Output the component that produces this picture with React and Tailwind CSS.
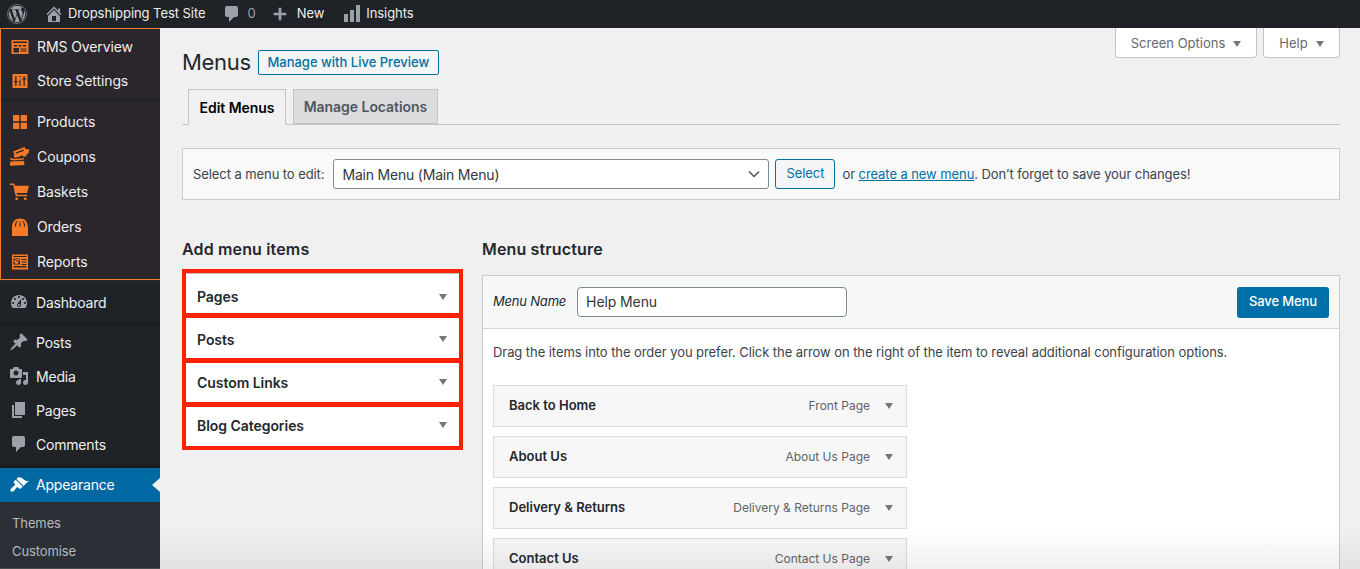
import React from 'react';
import { FaWordpress } from 'react-icons/fa';

const Dash = ({ d, className = '' }) => (
  <svg viewBox="0 0 20 20" className={className} fill="currentColor">
    <path d={d} />
  </svg>
);

const paths = {
  home: 'M16 8.5l1.53 1.53-1.06 1.06L10 4.62l-6.47 6.47-1.06-1.06L10 2.5l4 4v-2h2v4zm-6-2.46l6 5.99V18H4v-5.97zM12 17v-5H8v5h4z',
  comment: 'M5 2h9c1.1 0 2 .9 2 2v7c0 1.1-.9 2-2 2h-2l-5 5v-5H5c-1.1 0-2-.9-2-2V4c0-1.1.9-2 2-2z',
  plus: 'M17 8.5v3h-5.5V17h-3v-5.5H3v-3h5.5V3h3v5.5H17z',
  bars: 'M2 10h4v8H2zM8 6h4v12H8zM14 1h4v17h-4z',
  dashboard: 'M3.76 16h12.48c1.1-1.37 1.76-3.11 1.76-5 0-4.42-3.58-8-8-8s-8 3.58-8 8c0 1.89.66 3.63 1.76 5zM10 4c.55 0 1 .45 1 1s-.45 1-1 1-1-.45-1-1 .45-1 1-1zM6 6c.55 0 1 .45 1 1s-.45 1-1 1-1-.45-1-1 .45-1 1-1zm8 0c.55 0 1 .45 1 1s-.45 1-1 1-1-.45-1-1 .45-1 1-1zm-5.37 5.55L12 7v6c0 1.1-.9 2-2 2s-2-.9-2-2c0-.57.24-1.08.63-1.45zM4 10c.55 0 1 .45 1 1s-.45 1-1 1-1-.45-1-1 .45-1 1-1zm12 0c.55 0 1 .45 1 1s-.45 1-1 1-1-.45-1-1 .45-1 1-1zm-5 3c0-.55-.45-1-1-1s-1 .45-1 1 .45 1 1 1 1-.45 1-1z',
  pin: 'M10.44 3.02l1.82-1.82 6.36 6.35-1.83 1.82c-1.05-.68-2.48-.57-3.41.36l-.75.75c-.92.93-1.04 2.35-.35 3.41l-1.83 1.82-2.41-2.41-2.8 2.79c-.42.42-3.38 2.71-3.8 2.29s1.86-3.39 2.28-3.81l2.79-2.79L4.1 9.36l1.83-1.82c1.05.69 2.48.57 3.4-.36l.75-.75c.93-.92 1.05-2.35.36-3.41z',
  media: 'M13 11V4c0-.55-.45-1-1-1h-1.67L9 1H5L3.67 3H2c-.55 0-1 .45-1 1v7c0 .55.45 1 1 1h10c.55 0 1-.45 1-1zM7 4.5c1.38 0 2.5 1.12 2.5 2.5S8.38 9.5 7 9.5 4.5 8.38 4.5 7 5.62 4.5 7 4.5zM14 6h5v10.5c0 1.38-1.12 2.5-2.5 2.5S14 17.88 14 16.5s1.12-2.5 2.5-2.5c.17 0 .34.02.5.05V9h-3V6zm-4 8.05V13h2v3.5c0 1.38-1.12 2.5-2.5 2.5S7 17.88 7 16.5 8.12 14 9.5 14c.17 0 .34.02.5.05z',
  page: 'M6 15V2h10v13H6zm-1 1h8v2H3V5h2v11z',
  brush: 'M14.48 11.06L7.41 3.99l1.5-1.5c.5-.56 2.3-.47 3.51.32 1.21.8 1.43 1.28 2.91 2.1 1.18.64 2.45 1.26 4.45.85zm-.71.71L6.7 4.7 4.93 6.47c-.39.39-.39 1.02 0 1.41l1.06 1.06c.39.39.39 1.03 0 1.42-.6.6-1.43 1.11-2.21 1.69-.35.26-.7.53-1.01.84C1.43 13.71.96 15.56 1.69 16.31c.75.74 2.6.27 3.42-.57.31-.31.58-.66.84-1.01.58-.78 1.09-1.61 1.69-2.21.39-.39 1.02-.39 1.41 0l1.06 1.06c.39.39 1.02.39 1.41 0z',
};

// orange store icons, hand drawn on an 18 box
const OrangeIcon = ({ name }) => {
  const common = { viewBox: '0 0 18 18', className: 'w-[18px] h-[18px] text-[#f47a28]', fill: 'currentColor' };
  if (name === 'overview') {
    return (
      <svg {...common}>
        <path fillRule="evenodd" d="M.5 2h17v14H.5zM2 3.500v1.500h14V3.500zM3 7v1.500h3V7zm4.500 0v1.500h3V7zM12 7v1.500h3V7zM2.500 10v4.500H8V10zm7 .5v1h6v-1zm0 2v1h6v-1z" />
      </svg>
    );
  }
  if (name === 'settings') {
    return (
      <svg {...common}>
        <path fillRule="evenodd" d="M1.500 2h15v14h-15zM4.200 4v5H3v1.200h1.200V14h1.300v-3.800h1.200V9H5.500V4zM12.500 4v2.200h-1.300v1.200h1.300V14h1.300V7.400H15V6.200h-1.200V4zM8.400 4v1.500h1.200V4zM8.400 7.500V14h1.200V7.500z" />
      </svg>
    );
  }
  if (name === 'grid') {
    return (
      <svg {...common}>
        <path d="M2 2h6.300v6.300H2zM9.700 2H16v6.300H9.700zM2 9.700h6.300V16H2zM9.700 9.700H16V16H9.700z" />
      </svg>
    );
  }
  if (name === 'coupon') {
    return (
      <svg viewBox="0 0 21 20" className="w-[21px] h-5 text-[#f47a28]" fill="currentColor">
        <path fillRule="evenodd" d="M4 4.500L15.500 0l1.200 2.200 3.600.4-1 3.800-2 .8.500 1.600-3.300 1.200-.8-1.800L6 11 4.500 8.500 5.500 7.500z M6.500 5.500l8-3 .5 1.300-8 3z" />
        <path d="M1.500 11l4 1 9-1 .5 1.500-10 1L1 12.500zM1 14.500l14-.5.500 1.500-.5 1 .5 1.500-14 .8-1-2.300 1-.5z" />
      </svg>
    );
  }
  if (name === 'cart') {
    return (
      <svg viewBox="0 0 20 18" className="w-[19px] h-[18px] text-[#f47a28]" fill="currentColor">
        <path d="M0 0h4.500l.7 2.500H20l-2 7.500H7l.5 2H18v1.500H6L3.300 1.500H0z" />
        <circle cx="7" cy="16.200" r="1.500" />
        <circle cx="16" cy="16.200" r="1.500" />
      </svg>
    );
  }
  if (name === 'bag') {
    return (
      <svg {...common}>
        <path fillRule="evenodd" d="M1 8.500C1.500 3.500 4 .5 9 .5s7.500 3 8 8V18H1zM3.800 8.500H5C5.200 6 5.700 4 6.800 2.600 5 3.300 4 5.500 3.800 8.500zM8.400 8.500h1.200c-.1-2.500-.2-4.500-.6-6.300-.4 1.800-.5 3.800-.6 6.300zM13 8.500h1.200c-.2-3-1.200-5.200-3-5.900C12.300 4 12.800 6 13 8.500z" />
      </svg>
    );
  }
  return (
    <svg {...common}>
      <path fillRule="evenodd" d="M1 1.500h16v15H1zM2.500 3v1h13V3zM2.500 5.500v6H9v-6zM10.500 6v1H15.500V6zM10.500 8.500v1H15.500v-1zM2.500 13v1.500h13V13zM10.500 11v1H15.500v-1z" />
      <path d="M5.500 6.300a2.300 2.300 0 1 0 2.300 2.300H5.500z" />
      <path d="M6.300 5.800h2v2h-2z" />
    </svg>
  );
};

const storeItems = [
  { label: 'Products', icon: 'grid' },
  { label: 'Coupons', icon: 'coupon' },
  { label: 'Baskets', icon: 'cart' },
  { label: 'Orders', icon: 'bag' },
  { label: 'Reports', icon: 'report' },
];

const wpItems = [
  { label: 'Posts', icon: paths.pin },
  { label: 'Media', icon: paths.media },
  { label: 'Pages', icon: paths.page },
  { label: 'Comments', icon: paths.comment },
];

const Caret = ({ className = '' }) => (
  <span className={`block w-0 h-0 border-x-[4px] border-x-transparent border-t-[6px] ${className}`} />
);

const StoreRow = ({ label, icon, height }) => (
  <div className={`flex items-center ${height}`}>
    <span className="w-[36px] flex justify-center pl-[1px]">
      <OrangeIcon name={icon} />
    </span>
    <span className="text-[14px] tracking-[-0.1px] text-[#eeeeee]">{label}</span>
  </div>
);

const WpRow = ({ label, icon }) => (
  <div className="flex items-center h-[34px]">
    <span className="w-[36px] flex justify-center pl-[1px]">
      <Dash d={icon} className="w-5 h-5 text-[#9ca1a7]" />
    </span>
    <span className="text-[14px] tracking-[-0.2px] text-[#eeeeee]">{label}</span>
  </div>
);

const Sidebar = () => (
  <aside className="w-[160px] shrink-0 bg-[#1f2327] flex flex-col">
    <div className="bg-[#2a262b] border-t border-b border-l border-[#f47a28] h-[252px] flex flex-col">
      <div>
        <StoreRow label="RMS Overview" icon="overview" height="h-[35px]" />
        <StoreRow label="Store Settings" icon="settings" height="h-[33px]" />
      </div>
      <div className="h-[3px] mt-[2px] bg-[#1f2327]" />
      <div className="pt-[2px]">
        {storeItems.map((item) => (
          <StoreRow key={item.label} label={item.label} icon={item.icon} height="h-[35px]" />
        ))}
      </div>
    </div>
    <div className="h-[3px] bg-[#22262b]" />
    <div className="flex items-center h-[39px] pb-[1px]">
      <span className="w-[36px] flex justify-center pl-[1px]">
        <Dash d={paths.dashboard} className="w-5 h-5 text-[#9ca1a7]" />
      </span>
      <span className="text-[14px] tracking-[-0.2px] text-[#eeeeee]">Dashboard</span>
    </div>
    <div className="h-[3px] bg-[#1a1d20]" />
    <div>
      {wpItems.map((item) => (
        <WpRow key={item.label} label={item.label} icon={item.icon} />
      ))}
    </div>
    <div className="h-[3px] mt-[4px] bg-[#1a1d20]" />
    <div className="relative flex items-center h-[34px] pb-[1px] bg-[#0069a4] text-white">
      <span className="w-[36px] flex justify-center pl-[1px]">
        <Dash d={paths.brush} className="w-5 h-5" />
      </span>
      <span className="text-[14px] tracking-[-0.2px]">Appearance</span>
      <span className="absolute right-0 top-[10px] w-0 h-0 border-y-[7px] border-y-transparent border-r-[8px] border-r-[#f0f0f1]" />
    </div>
    <div className="flex-1 bg-[#2c3036] border-b border-[#4a4e53] pl-3 pt-[7px] text-[13px] tracking-[-0.1px] text-[#b4b9be]">
      <div className="h-7 leading-7">Themes</div>
      <div className="h-7 leading-7">Customise</div>
    </div>
  </aside>
);

const TopBar = () => (
  <header className="h-[28px] shrink-0 bg-[#1f2327] flex items-center text-[13px] tracking-[-0.06px] text-[#eeeeee]">
    <FaWordpress className="ml-[7px] w-[20px] h-[20px] text-[#9ca1a7]" />
    <Dash d={paths.home} className="ml-[17px] w-5 h-5 text-[#9ca1a7]" />
    <span className="ml-[4px]">Dropshipping Test Site</span>
    <Dash d={paths.comment} className="ml-[16px] w-5 h-5 text-[#9ca1a7]" />
    <span className="ml-[6px] text-[#9ca1a7]">0</span>
    <Dash d={paths.plus} className="ml-[15px] w-[18px] h-[18px] text-[#9ca1a7]" />
    <span className="ml-[8px]">New</span>
    <Dash d={paths.bars} className="ml-[18px] w-[20px] h-[20px] text-[#9ca1a7]" />
    <span className="ml-[4px]">Insights</span>
  </header>
);

const addItems = [
  { label: 'Pages', row: 'h-[40px] pt-[6px] border-t border-[#c3c4c7]' },
  { label: 'Posts', row: 'h-[40px] pt-[2px]' },
  { label: 'Custom Links', row: 'h-[39px] pb-[1px]' },
  { label: 'Blog Categories', row: 'h-[39px] pb-[3px]' },
];

const AddMenuItems = () => (
  <section className="w-[281px] shrink-0">
    <h2 className="text-[16px] leading-[22px] font-semibold tracking-[0.15px] text-[#23282d] mt-[1px]">Add menu items</h2>
    <div className="mt-[9px] border-[4px] border-[#fc2200] bg-[#fc2200] flex flex-col gap-[5px]">
      {addItems.map((item) => (
        <div key={item.label} className={`bg-white flex items-center justify-between pl-[11px] pr-[12px] ${item.row}`}>
          <span className="text-[14px] font-semibold tracking-[-0.05px] text-[#23282d]">{item.label}</span>
          <Caret className="border-t-[#72777c]" />
        </div>
      ))}
    </div>
  </section>
);

const structure = [
  { label: 'Back to Home', type: 'Front Page' },
  { label: 'About Us', type: 'About Us Page' },
  { label: 'Delivery & Returns', type: 'Delivery & Returns Page' },
  { label: 'Contact Us', type: 'Contact Us Page' },
];

const MenuStructure = () => (
  <section className="flex-1 min-w-0">
    <h2 className="text-[16px] leading-[22px] font-semibold tracking-[0.15px] text-[#23282d] mt-[1px]">Menu structure</h2>
    <div className="mt-[15px] border border-[#c8ccd0] bg-white">
      <div className="h-[53px] bg-[#f6f7f7] border-b border-[#d5d8da] flex items-center pl-[10px] pr-[10px]">
        <span className="text-[13px] italic tracking-[-0.2px] text-[#23282d]">Menu Name</span>
        <div className="ml-[11px] -mt-[1px] w-[270px] h-[30px] bg-white border border-[#7e8993] rounded-[4px] flex items-center px-2 text-[14px] tracking-[-0.1px] text-[#32373c]">
          Help Menu
        </div>
        <button className="ml-auto w-[92px] h-[31px] rounded-[3px] bg-[#0071a8] text-white text-[13px] tracking-[-0.1px] font-medium">Save Menu</button>
      </div>
      <div className="px-[10px] pt-[14px]">
        <p className="text-[13px] leading-[18px] tracking-[-0.07px] text-[#3c434a]">
          Drag the items into the order you prefer. Click the arrow on the right of the item to reveal additional configuration options.
        </p>
        <div className="mt-[24px] w-[414px] flex flex-col gap-[9px]">
          {structure.map((item) => (
            <div key={item.label} className="h-[42px] border border-[#dcdcde] bg-[#f7f7f7] flex items-center pl-[15px] pr-[13px]">
              <span className="text-[13px] font-semibold text-[#23282d]">{item.label}</span>
              <span className="ml-auto text-[12px] text-[#5f6468]">{item.type}</span>
              <Caret className="ml-[15px] border-t-[#72777c]" />
            </div>
          ))}
        </div>
      </div>
    </div>
  </section>
);

const App = () => (
  <div className="relative w-[1360px] h-[569px] overflow-hidden flex flex-col bg-[#f0f0f1] font-['Inter','Liberation_Sans',sans-serif]">
    <TopBar />
    <div className="flex flex-1 min-h-0">
      <Sidebar />
      <main className="flex-1 min-w-0 pl-[22px] pr-[20px]">
        <div className="flex items-start justify-between">
          <div className="pt-[22px] flex items-center">
            <h1 className="text-[22px] leading-[25px] tracking-[-0.3px] text-[#23282d]">Menus</h1>
            <button className="ml-[7px] w-[181px] h-[25px] border border-[#0071a1] rounded-[2px] bg-[#f3f5f6] text-[#0071a1] text-[13px] font-medium">
              Manage with Live Preview
            </button>
          </div>
          <div className="flex gap-[6px]">
            <div className="w-[142px] h-[30px] pt-[2px] bg-white border border-t-0 border-[#c3c4c7] rounded-b-[4px] flex items-center justify-center gap-[8px] text-[13px] text-[#646970]">
              Screen Options <Caret className="border-t-[#72777c]" />
            </div>
            <div className="w-[77px] h-[30px] pt-[2px] bg-white border border-t-0 border-[#c3c4c7] rounded-b-[4px] flex items-center justify-center gap-[8px] text-[13px] text-[#646970]">
              Help <Caret className="border-t-[#72777c]" />
            </div>
          </div>
        </div>

        <div className="mt-[14px] h-[36px] border-b border-[#c3c4c7] flex items-end pl-[6px] gap-[7px]">
          <div className="w-[98px] h-[36px] -mb-[1px] bg-[#f0f0f1] border border-[#c3c4c7] border-b-[#f0f0f1] flex items-center justify-center text-[14px] font-semibold tracking-[-0.05px] text-[#000000]">
            Edit Menus
          </div>
          <div className="w-[145px] h-[35px] bg-[#dcdcde] border border-[#c3c4c7] flex items-center justify-center text-[14px] font-semibold tracking-[-0.05px] text-[#50575e]">
            Manage Locations
          </div>
        </div>

        <div className="mt-[23px] h-[52px] bg-[#f9f9f9] border border-[#c9cdd1] flex items-center pl-[10px] text-[13px] tracking-[-0.08px] text-[#3c434a]">
          <span className="pt-[1px]">Select a menu to edit:</span>
          <div className="ml-[9px] w-[436px] h-[30px] bg-white border border-[#7e8993] rounded-[3px] flex items-center justify-between pl-2 pr-[8px] text-[14px] tracking-[-0.2px] text-[#32373c]">
            Main Menu (Main Menu)
            <svg viewBox="0 0 12 8" className="w-[12px] h-[8px]" fill="none" stroke="#50575e" strokeWidth="1.500">
              <path d="M1 1.500l5 5 5-5" />
            </svg>
          </div>
          <button className="ml-[6px] w-[60px] h-[30px] border border-[#0071a1] rounded-[3px] bg-[#f3f5f6] text-[#0071a1] text-[13px]">Select</button>
          <span className="ml-[7px] pt-[1px]">
            or <span className="text-[#0071a1] underline">create a new menu</span>. Don’t forget to save your changes!
          </span>
        </div>

        <div className="mt-[37px] flex gap-[19px]">
          <AddMenuItems />
          <MenuStructure />
        </div>
      </main>
    </div>
    {/* soft fade along the bottom edge of the capture */}
    <div className="absolute left-[160px] right-0 bottom-0 h-[40px] bg-gradient-to-b from-transparent to-[#000000]/[0.06] pointer-events-none" />
  </div>
);

export default App;
